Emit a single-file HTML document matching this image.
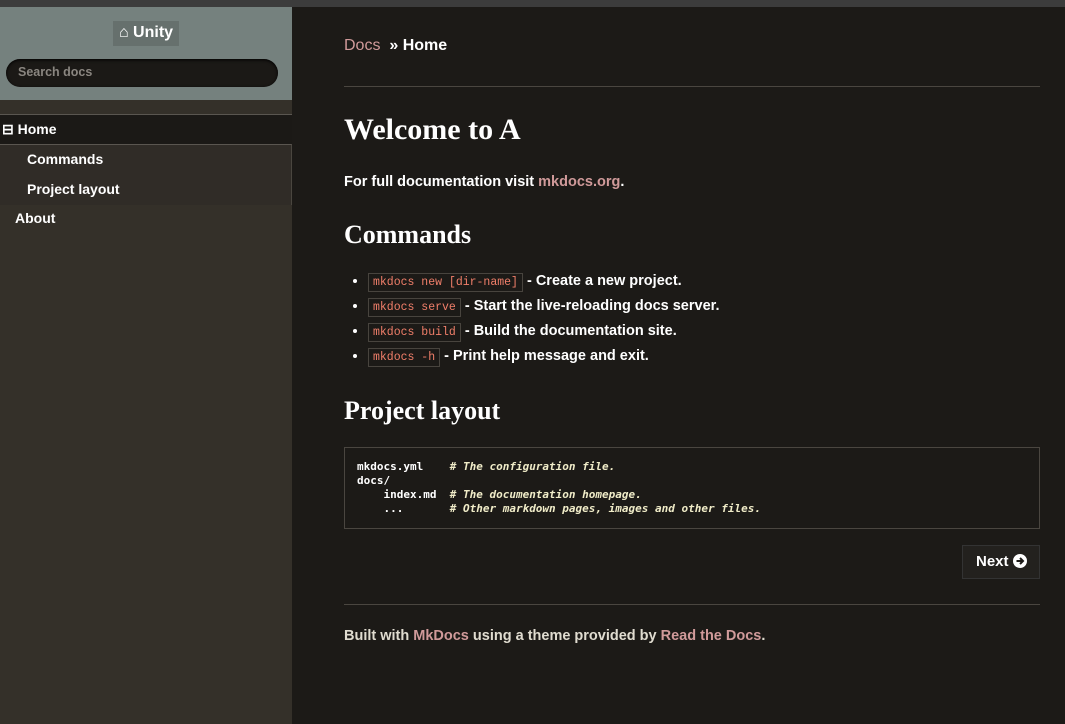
<!DOCTYPE html>
<html><head><meta charset="utf-8"><style>
*{box-sizing:border-box}
body{margin:0;width:1065px;height:724px;background:#1c1a17;font-family:"Liberation Sans",sans-serif;color:#e8e6e3;overflow:hidden;position:relative}
.top{position:absolute;left:0;top:0;width:1065px;height:7px;background:#3c3c3c}
.side{position:absolute;left:0;top:7px;width:292px;height:717px;background:#343029}
.hdr{height:93px;background:#75817e;text-align:center;padding-top:14px}
.logo{display:inline-block;background:#66706d;color:#fff;font-weight:bold;font-size:16px;padding:3px 6px;height:25px}
.search{margin:13px 14px 0 6px;height:28px;border-radius:14px;background:#1b1916;color:#8a8680;font-size:12.5px;font-weight:bold;padding:6px 12px;text-align:left;box-shadow:inset 0 1px 3px #000}
.nav{margin-top:14px;border-top:1px solid #5a5650}
.home{height:29px;background:#1b1916;color:#fff;font-weight:bold;font-size:14px;padding:6px 0 0 2px}
.sub{background:#302c27;border-top:1px solid #5a5650;border-right:1px solid #4a463f}
.sub div{height:30px;padding:6px 0 0 27px;font-size:14px;color:#fff;font-weight:bold}
.about{padding:5px 0 0 15px;font-size:14px;color:#fff;font-weight:bold}
.main{position:absolute;left:344px;top:0;width:696px}
a{color:#d09a9a;text-decoration:none}
.bc{position:absolute;top:37px;font-size:16px;color:#fff;font-weight:bold}
.bc a{font-weight:normal}
.hr{position:absolute;left:0;width:696px;height:1px;background:#4a4640}
h1,h2{font-family:"Liberation Serif",serif;margin:0;position:absolute;color:#fff;font-weight:bold}
h1{top:113px;font-size:30px}
h2{font-size:26px}
p{position:absolute;margin:0;font-size:14.5px;color:#fff;font-weight:bold}
ul{position:absolute;top:273px;margin:0;padding:0 0 0 24px;font-size:14.5px;font-weight:bold;color:#fff;list-style:disc}
li{height:25px}
code{font-family:"Liberation Mono",monospace;font-size:11.5px;color:#f17f6a;border:1px solid #48443e;padding:2px 4px;background:#1c1a17;font-weight:normal}
pre{position:absolute;top:447px;left:0;width:696px;height:82px;margin:0;border:1px solid #4a4640;padding:12px;font-family:"DejaVu Sans Mono",monospace;font-size:11px;line-height:14px;color:#fff;font-weight:bold}
pre i{color:#f0ecc8}
.next{position:absolute;left:618px;top:545px;width:78px;height:34px;border:1px solid #333;background:#23211e;color:#fff;font-size:15px;font-weight:bold;padding:7px 0 0 13px}
.foot{position:absolute;top:628px;font-size:14.5px;color:#e0dcd0;font-weight:bold}
</style></head><body>
<div class="top"></div>
<div class="side">
<div class="hdr"><span class="logo">&#8962; Unity</span><div class="search">Search docs</div></div>
<div class="nav">
<div class="home">⊟ Home</div>
<div class="sub"><div>Commands</div><div>Project layout</div></div>
<div class="about">About</div>
</div></div>
<div class="main">
<div class="bc"><a>Docs</a> &nbsp;» Home</div>
<div class="hr" style="top:86px"></div>
<h1>Welcome to A</h1>
<p style="top:174px">For full documentation visit <a>mkdocs.org</a>.</p>
<h2 style="top:220px">Commands</h2>
<ul>
<li><code>mkdocs new [dir-name]</code> - Create a new project.</li>
<li><code>mkdocs serve</code> - Start the live-reloading docs server.</li>
<li><code>mkdocs build</code> - Build the documentation site.</li>
<li><code>mkdocs -h</code> - Print help message and exit.</li>
</ul>
<h2 style="top:396px">Project layout</h2>
<pre>mkdocs.yml    <i># The configuration file.</i>
docs/
    index.md  <i># The documentation homepage.</i>
    ...       <i># Other markdown pages, images and other files.</i></pre>
<div class="next">Next <svg width="14" height="14" viewBox="0 0 14 14" style="vertical-align:-2px"><circle cx="7" cy="7" r="7" fill="#fff"/><path d="M3.5 7H10M7 4l3 3-3 3" stroke="#1c1a17" stroke-width="2" fill="none"/></svg></div>
<div class="hr" style="top:604px"></div>
<div class="foot">Built with <a>MkDocs</a> using a theme provided by <a>Read the Docs</a>.</div>
</div>
</body></html>
